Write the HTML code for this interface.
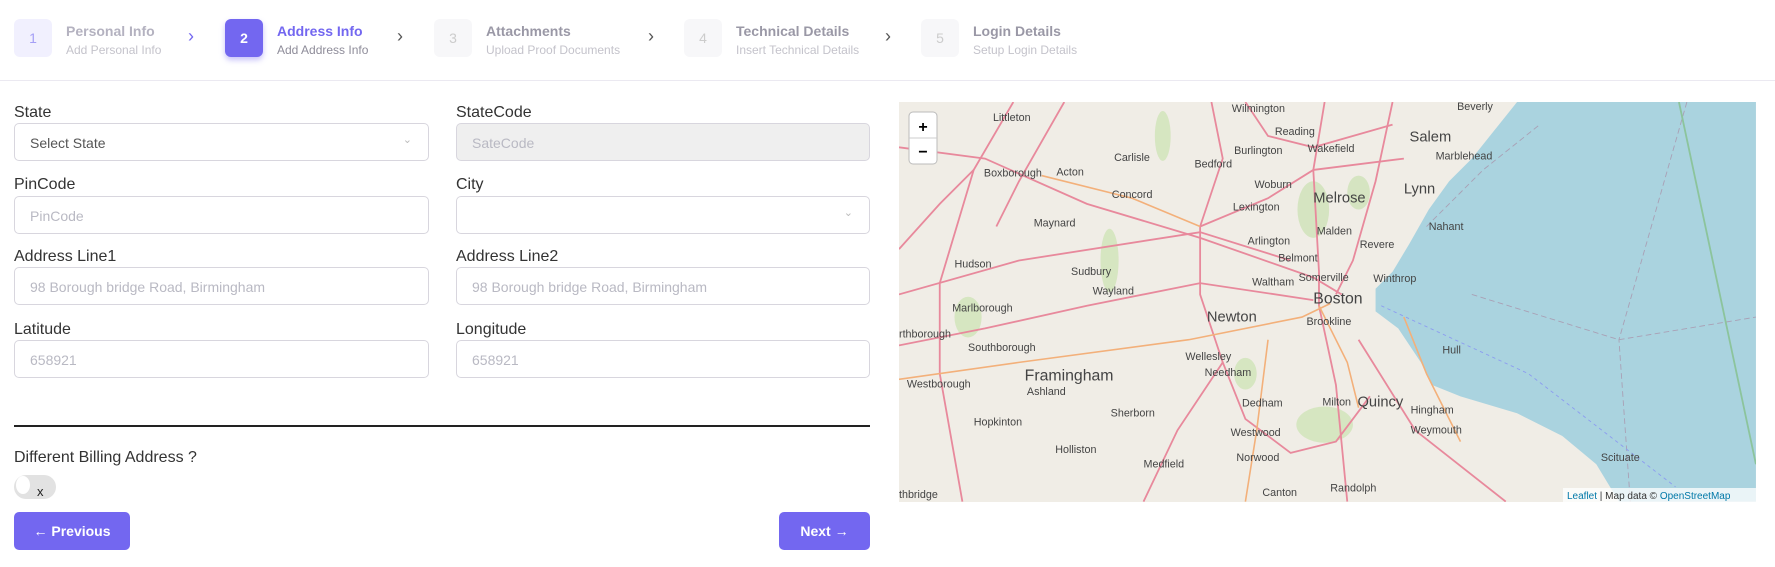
<!DOCTYPE html>
<html><head><meta charset="utf-8"><style>
*{box-sizing:border-box;margin:0;padding:0}
body{width:1775px;height:567px;background:#fff;font-family:"Liberation Sans",sans-serif;position:relative;overflow:hidden;color:#333}
.a{position:absolute}
.box{position:absolute;top:19px;width:38px;height:38px;border-radius:6px;background:#f7f7f9;color:#ccc;font-size:14px;display:flex;align-items:center;justify-content:center}
.t{position:absolute;top:23px;font-size:14px;font-weight:bold;color:#9a98a6;white-space:nowrap}
.s{position:absolute;top:43px;font-size:12px;color:#c4c3cb;white-space:nowrap}
.ch{position:absolute;top:26px;font-size:18px;color:#555}
.lbl{position:absolute;font-size:16px;color:#333}
.inp{position:absolute;height:38px;border:1px solid #d8d6de;border-radius:5px;font-size:14px;color:#b9b9c3;padding:11px 15px;background:#fff}
.btn{position:absolute;top:512px;height:38px;background:#7367f0;color:#fff;border-radius:5px;font-size:14px;font-weight:bold;display:flex;align-items:center;justify-content:center}
</style></head><body>
<div class="box" style="left:14px;background:#f1f0fe;color:#a59ff6">1</div>
<div class="t" style="left:66px;color:#b4b2c0">Personal Info</div><div class="s" style="left:66px">Add Personal Info</div>
<div class="ch" style="left:188px;color:#7367f0">›</div>
<div class="box" style="left:225px;background:#7367f0;color:#fff;font-weight:bold;box-shadow:0 3px 6px rgba(115,103,240,.4)">2</div>
<div class="t" style="left:277px;color:#7367f0">Address Info</div><div class="s" style="left:277px;color:#8e8c99">Add Address Info</div>
<div class="ch" style="left:397px">›</div>
<div class="box" style="left:434px">3</div>
<div class="t" style="left:486px">Attachments</div><div class="s" style="left:486px">Upload Proof Documents</div>
<div class="ch" style="left:648px">›</div>
<div class="box" style="left:684px">4</div>
<div class="t" style="left:736px">Technical Details</div><div class="s" style="left:736px">Insert Technical Details</div>
<div class="ch" style="left:885px">›</div>
<div class="box" style="left:921px">5</div>
<div class="t" style="left:973px">Login Details</div><div class="s" style="left:973px">Setup Login Details</div>
<div class="a" style="left:0;top:80px;width:1775px;height:1px;background:#ebe9f1"></div>

<div class="lbl" style="left:14px;top:104px">State</div>
<div class="inp" style="left:14px;top:123px;width:415px;color:#555">Select State<span style="position:absolute;right:16px;top:9px;color:#bbb;font-size:11px">⌄</span></div>
<div class="lbl" style="left:456px;top:104px">StateCode</div>
<div class="inp" style="left:456px;top:123px;width:414px;background:#efefef">SateCode</div>
<div class="lbl" style="left:14px;top:176px">PinCode</div>
<div class="inp" style="left:14px;top:196px;width:415px">PinCode</div>
<div class="lbl" style="left:456px;top:176px">City</div>
<div class="inp" style="left:456px;top:196px;width:414px"><span style="position:absolute;right:16px;top:9px;color:#bbb;font-size:11px">⌄</span></div>
<div class="lbl" style="left:14px;top:248px">Address Line1</div>
<div class="inp" style="left:14px;top:267px;width:415px">98 Borough bridge Road, Birmingham</div>
<div class="lbl" style="left:456px;top:248px">Address Line2</div>
<div class="inp" style="left:456px;top:267px;width:414px">98 Borough bridge Road, Birmingham</div>
<div class="lbl" style="left:14px;top:321px">Latitude</div>
<div class="inp" style="left:14px;top:340px;width:415px">658921</div>
<div class="lbl" style="left:456px;top:321px">Longitude</div>
<div class="inp" style="left:456px;top:340px;width:414px">658921</div>
<div class="a" style="left:14px;top:425px;width:856px;height:2px;background:#222"></div>
<div class="lbl" style="left:14px;top:449px">Different Billing Address ?</div>
<div class="a" style="left:14px;top:475px;width:42px;height:24px;border-radius:12px;background:#e2e2e2"></div>
<div class="a" style="left:16px;top:476px;width:14px;height:18px;border-radius:50%;background:#fff"></div>
<div class="a" style="left:37px;top:484px;font-size:13px;color:#222">x</div>
<div class="btn" style="left:14px;width:116px">← Previous</div>
<div class="btn" style="left:779px;width:91px">Next →</div>

<svg class="a" style="left:899px;top:102px" width="857" height="400" viewBox="0 0 857 400">
<rect width="857" height="400" fill="#f0ede6"/>
<g transform="scale(1.132) translate(-794,-90)">
<g fill="#cfe3b8" opacity=".8">
<ellipse cx="1027" cy="120" rx="7" ry="22"/><ellipse cx="1160" cy="185" rx="14" ry="25"/><ellipse cx="980" cy="230" rx="8" ry="28"/>
<ellipse cx="1170" cy="375" rx="25" ry="16"/><ellipse cx="855" cy="280" rx="12" ry="18"/><ellipse cx="1200" cy="170" rx="10" ry="15"/><ellipse cx="1100" cy="330" rx="10" ry="14"/>
</g>
<polygon fill="#aad3df" points="1340,90 1320,115 1300,140 1280,160 1262,185 1245,215 1230,240 1215,255 1215,275 1235,290 1255,320 1265,340 1290,350 1340,365 1380,385 1410,410 1430,443 1551,443 1551,90"/>
<g fill="none" stroke="#e8899c" stroke-width="1.6">
<path d="M794,130 L870,140 L960,180 L1060,210 L1160,245 L1185,260"/>
<path d="M1070,90 L1080,140 L1060,200 L1060,260 L1080,320 L1100,370 L1140,400 L1180,390 L1210,350"/>
<path d="M895,90 L860,150 L830,250 L830,330 L850,443"/>
<path d="M1170,90 L1160,150 L1165,240 L1165,270 L1180,340 L1190,443"/>
<path d="M1230,90 L1215,160 L1195,230 L1180,260"/>
<path d="M1200,300 L1250,380 L1330,443"/>
<path d="M794,260 L900,230 L1060,205 L1140,230"/>
<path d="M794,305 L870,290 L960,270 L1060,250 L1160,265"/>
<path d="M794,220 L830,180 L860,150"/>
<path d="M940,90 L900,160 L880,200"/>
<path d="M1060,200 L1120,175 L1160,150 L1240,140"/>
<path d="M1080,320 L1040,380 L1010,443"/>
<path d="M1100,90 L1120,120 L1160,130 L1230,110"/>
</g>
<g fill="none" stroke="#f3b07a" stroke-width="1.4">
<path d="M794,335 L900,320 L1050,300 L1150,280 L1175,268"/>
<path d="M920,155 L1000,175 L1060,200"/>
<path d="M1165,270 L1190,320 L1200,360"/>
<path d="M1120,300 L1110,380 L1100,443"/>
<path d="M1240,280 L1260,330 L1290,390"/>
</g>
<g fill="none" stroke="#a9a0b5" stroke-width="0.8" stroke-dasharray="5 3">
<path d="M1490,90 L1430,300 L1440,443"/><path d="M1300,260 L1430,300 L1551,280"/><path d="M1260,200 L1310,150 L1360,110"/>
</g>
<g fill="none" stroke="#8c9cf0" stroke-width="0.8" stroke-dasharray="3 3"><path d="M1220,270 L1350,330 L1480,430"/></g>
<path d="M1483,90 L1551,410" stroke="#8cc49c" stroke-width="1.6" fill="none"/>
<g font-family="Liberation Sans,sans-serif" fill="#444" font-size="9.5">
<text x="877" y="107">Littleton</text><text x="984" y="142">Carlisle</text><text x="1088" y="99">Wilmington</text><text x="1126" y="119">Reading</text><text x="1287" y="97">Beverly</text>
<text x="1090" y="136">Burlington</text><text x="1155" y="134">Wakefield</text><text x="1268" y="141">Marblehead</text><text x="1055" y="148">Bedford</text>
<text x="869" y="156">Boxborough</text><text x="933" y="155">Acton</text><text x="1108" y="166">Woburn</text><text x="982" y="175">Concord</text>
<text x="1089" y="186">Lexington</text><text x="913" y="200">Maynard</text><text x="1262" y="203">Nahant</text><text x="1163" y="207">Malden</text>
<text x="1102" y="216">Arlington</text><text x="1201" y="219">Revere</text><text x="843" y="236">Hudson</text><text x="1129" y="231">Belmont</text>
<text x="946" y="243">Sudbury</text><text x="1147" y="248">Somerville</text><text x="1213" y="249">Winthrop</text><text x="1106" y="252">Waltham</text>
<text x="965" y="260">Wayland</text><text x="841" y="275">Marlborough</text><text x="1154" y="287">Brookline</text><text x="794" y="298">rthborough</text>
<text x="855" y="310">Southborough</text><text x="1047" y="318">Wellesley</text><text x="1274" y="312">Hull</text><text x="1064" y="332">Needham</text>
<text x="801" y="342">Westborough</text><text x="907" y="349">Ashland</text><text x="981" y="368">Sherborn</text><text x="1168" y="358">Milton</text>
<text x="1246" y="365">Hingham</text><text x="1097" y="359">Dedham</text><text x="860" y="376">Hopkinton</text><text x="1087" y="385">Westwood</text>
<text x="1246" y="383">Weymouth</text><text x="932" y="400">Holliston</text><text x="1092" y="407">Norwood</text><text x="1010" y="413">Medfield</text>
<text x="1414" y="407">Scituate</text><text x="1115" y="438">Canton</text><text x="1175" y="434">Randolph</text><text x="794" y="440">thbridge</text>
<text x="1245" y="125" font-size="13">Salem</text><text x="1240" y="171" font-size="13">Lynn</text><text x="1160" y="179" font-size="13">Melrose</text>
<text x="1160" y="268" font-size="14">Boston</text><text x="1066" y="284" font-size="13">Newton</text><text x="905" y="336" font-size="14">Framingham</text><text x="1199" y="359" font-size="13">Quincy</text>
</g>
</g>
<rect x="10" y="10" width="28" height="52" rx="4" fill="#fff" stroke="#bbb"/><line x1="10" y1="36" x2="38" y2="36" stroke="#ccc"/>
<text x="24" y="30" text-anchor="middle" font-family="Liberation Sans" font-weight="bold" font-size="16" fill="#000">+</text>
<text x="24" y="55" text-anchor="middle" font-family="Liberation Sans" font-weight="bold" font-size="16" fill="#000">−</text>
<rect x="664" y="386" width="193" height="14" fill="rgba(255,255,255,.75)"/>
<text x="668" y="397" font-family="Liberation Sans" font-size="10" fill="#333"><tspan fill="#0078a8">Leaflet</tspan> | Map data © <tspan fill="#0078a8">OpenStreetMap</tspan></text>
</svg>
</body></html>
